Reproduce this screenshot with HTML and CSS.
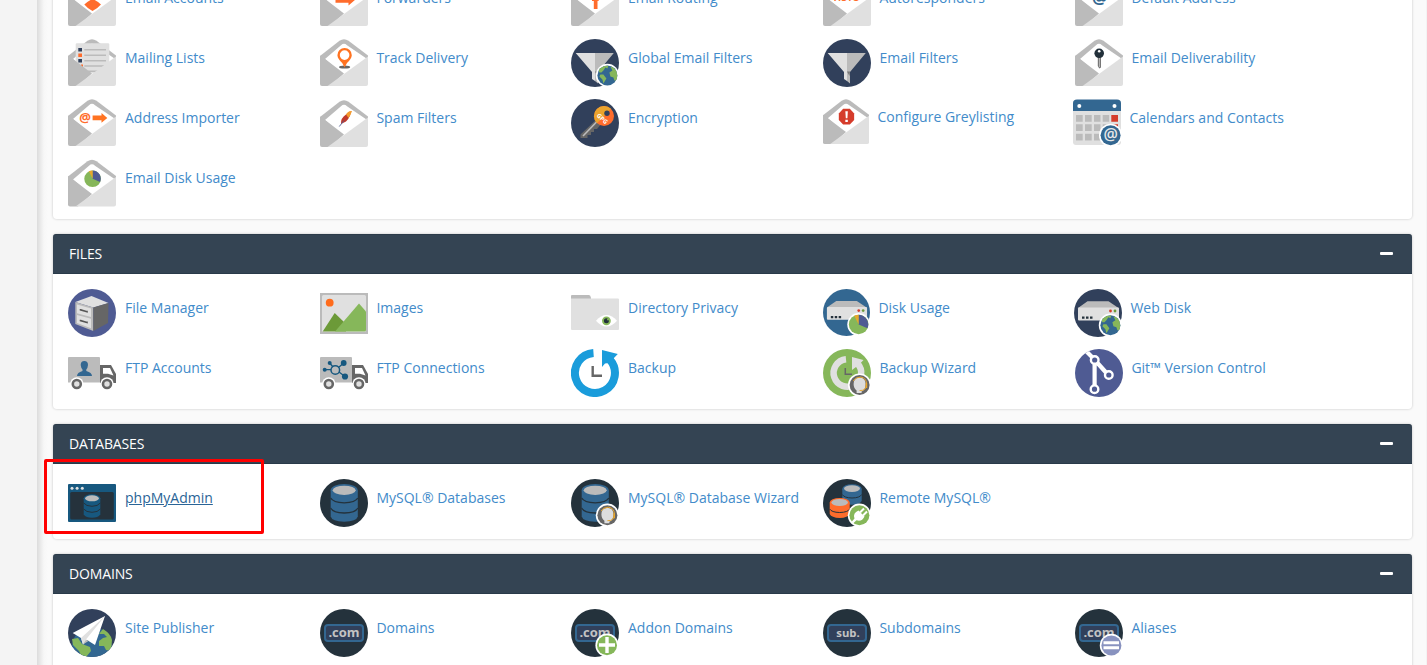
FILE: index.html
```html
<!DOCTYPE html>
<html lang="en">
<head>
<meta charset="utf-8">
<title>cPanel</title>
<link rel="stylesheet" href="styles.css">
</head>
<body>
<svg class="defs" width="0" height="0" aria-hidden="true">
  <defs>
    <clipPath id="disc"><circle cx="24" cy="24" r="24"/></clipPath>
    <clipPath id="unit"><circle r="10"/></clipPath>
    <g id="env-back">
      <path fill="#bbb" d="M0 17 L19.5 1.8 Q24 -1.5 28.5 1.8 L48 16.5 V19 L0 30Z"/>
      <path fill="#fff" d="M5 20 L21 6.2 Q24 3.5 27 6.2 L46.5 19.5 L24 36 Z"/>
    </g>
    <g id="env-front">
      <path fill="#bbb" d="M0 16.5 L5 20 L24 34.5 L10 47 H2 Q0 47 0 45Z"/>
      <path fill="#e0e0e0" d="M7.5 47 L48 17.5 V45 Q48 47 46 47Z"/>
    </g>
    <g id="globe">
      <circle r="11.6" fill="#fff"/><circle r="10" fill="#336791"/>
      <g clip-path="url(#unit)" fill="#86b75a"><path d="M-9 -6 Q-5 -10 1 -10 L0 -7 -2 -8 -4 -5 -6 -3 -8 -3Z M-7 -1 L-4 -1 -1 3 -4 8 -5 4 -8 1Z M3 -9 L6 -8 10 -4 10 5 7 5 6 2 3 1 2 -3 5 -5Z"/></g>
    </g>
    <g id="pie">
      <circle r="10" fill="#86b75a"/><path fill="#4f5b93" d="M0 0V-10A10 10 0 0 1 9 4Z"/><path fill="#e8a62c" d="M0 0L-4.5 -9A10 10 0 0 1 0 -10Z"/>
    </g>
    <g id="headset">
      <circle r="11.6" fill="#fff"/><circle r="10" fill="#666"/>
      <path fill="#ddd" d="M0 -7.5 Q6 -7 6 -1 Q6 5 2 6.5 V8 H-3 V5.5 Q-6 3 -6 -1 Q-6 -7 0 -7.5Z"/>
      <path fill="none" stroke="#e8a62c" stroke-width="1" d="M-6.5 -4 Q-4 -8 1 -8 Q7 -7 7 -1 Q7 6 0 5.5"/><path stroke="#e8a62c" stroke-width="1.6" d="M6.8 -2V3"/>
    </g>
    <g id="funnel">
      <circle cx="24" cy="24" r="24" fill="#31405b"/>
      <path fill="#e0e0e0" d="M4.7 14H24V42L21 40V33Z"/><path fill="#bbb" d="M24 14H42.8L27 33V44.5L24 42Z"/><path fill="#777" d="M24 32.5H27L26.5 37Z"/>
    </g>
    <g id="server">
      <path fill="#bbb" d="M4 19L13.5 12.3H34.5L44.5 19Z"/><rect x="4" y="18.5" width="41" height="13" rx="1" fill="#e0e0e0"/>
      <circle cx="36.5" cy="22" r="1.4" fill="#d53c2b"/><circle cx="41" cy="22" r="1.4" fill="#6c9a38"/>
      <path fill="#25323c" d="M8 27.5h2.5v2.3H8zM12 27.5h2.5v2.3H12zM16 27.5h2.5v2.3H16z"/>
    </g>
    <g id="truck">
      <path fill="#bbb" d="M1 8H31Q32 8 32 9V33.5H0V9Q0 8 1 8Z"/>
      <path fill="#666" d="M32 16H43L48 25V34H32Z"/><path fill="#fff" d="M35 19H42L45.5 26.5L40 24.7H35Z"/>
      <circle cx="8.8" cy="35" r="6.8" fill="#fff"/><circle cx="39" cy="35" r="6.8" fill="#fff"/>
      <circle cx="8.8" cy="35" r="4" fill="#e0e0e0" stroke="#666" stroke-width="2.6"/><circle cx="39" cy="35" r="4" fill="#e0e0e0" stroke="#666" stroke-width="2.6"/>
    </g>
    <g id="db">
      <path fill="#336791" d="M10.7 11.5V37.5Q12 42.5 24.2 42.8Q36.5 42.5 37.8 37.5V11.5Z"/>
      <ellipse cx="24.2" cy="11.3" rx="13.5" ry="6.3" fill="#336791"/><ellipse cx="24.2" cy="11.3" rx="11.5" ry="4.6" fill="#bbb"/>
      <path fill="none" stroke="#24323c" stroke-width="1.3" d="M10.7 19Q13 23.5 24.2 23.8Q35.5 23.5 37.8 19M10.7 29Q13 33.8 24.2 34Q35.5 33.8 37.8 29"/>
    </g>
    <g id="plate">
      <circle cx="24" cy="24" r="24" fill="#24323c"/><rect x="5" y="16" width="38" height="16" rx="3" fill="#31405b" stroke="#336791" stroke-width="2"/>
    </g>
    <g id="com"><use href="#plate"/><text class="glyph" x="24" y="28.4" font-size="13" fill="#c3c3c3">.com</text></g>
  </defs>
</svg>
<aside class="rail"></aside>
<main class="content">
  <section class="panel panel-email">
    <div class="grid">
      <a class="item"><svg class="icon" viewBox="0 0 48 48"><use href="#env-back"/><path fill="#ff6c2c" d="M16.3 25.5Q20 22 24.5 20Q29.5 22 33 25.5Q29 30 24.5 32Q20 30 16.3 25.5Z"/><use href="#env-front"/></svg><span>Email Accounts</span></a>
      <a class="item"><svg class="icon" viewBox="0 0 48 48"><use href="#env-back"/><path fill="#ff6c2c" d="M15.5 17.5H28V14L35.5 20.5L28.5 26.5V23.8H15.5Z"/><use href="#env-front"/></svg><span>Forwarders</span></a>
      <a class="item"><svg class="icon" viewBox="0 0 48 48"><use href="#env-back"/><path fill="#ff6c2c" d="M22.8 30V22H21L21 17H28V21.5L26.5 22V30Z"/><use href="#env-front"/></svg><span>Email Routing</span></a>
      <a class="item"><svg class="icon" viewBox="0 0 48 48"><use href="#env-back"/><text class="glyph" x="24" y="22.3" font-size="9" fill="#ff6c2c">AUTO</text><use href="#env-front"/></svg><span>Autoresponders</span></a>
      <a class="item"><svg class="icon" viewBox="0 0 48 48"><use href="#env-back"/><text class="glyph" x="24.5" y="24.5" font-size="17" fill="#336791">@</text><use href="#env-front"/></svg><span>Default Address</span></a>

      <a class="item"><svg class="icon" viewBox="0 0 48 48"><use href="#env-back"/><rect x="7.7" y="4.3" width="33.6" height="30" rx="1.3" fill="#e0e0e0"/><path fill="#31405b" d="M10.3 9H14v3.5h-3.7zM10.3 20H14v3.5h-3.7z"/><path fill="#ff6c2c" d="M10.3 14.5H14V18h-3.7zM13 25.5h2V28h-2z"/><path stroke="#bbb" stroke-width="1.6" d="M16.3 10.8H38M16.3 16.3H38M16.3 21.7H38M16.3 27H36M20 32.3H30"/><use href="#env-front"/></svg><span>Mailing Lists</span></a>
      <a class="item"><svg class="icon" viewBox="0 0 48 48"><use href="#env-back"/><use href="#env-front"/><ellipse cx="24.6" cy="28" rx="5.6" ry="1.6" fill="#666"/><path fill="#ff7321" fill-rule="evenodd" d="M24.6 9A7.2 7.2 0 0 1 31.8 16.2Q31.5 20 27 24L24.6 28.5L22.2 24Q17.7 20 17.4 16.2A7.2 7.2 0 0 1 24.6 9ZM24.6 11.3A4.8 4.8 0 1 0 24.6 20.9A4.8 4.8 0 1 0 24.6 11.3Z"/></svg><span>Track Delivery</span></a>
      <a class="item"><svg class="icon" viewBox="0 0 48 48"><use href="#funnel"/><use href="#globe" x="36.4" y="36.4"/></svg><span>Global Email Filters</span></a>
      <a class="item"><svg class="icon" viewBox="0 0 48 48"><use href="#funnel"/></svg><span>Email Filters</span></a>
      <a class="item"><svg class="icon" viewBox="0 0 48 48"><use href="#env-back"/><use href="#env-front"/><path fill="#777" d="M22.8 18H26V28.5L24.3 29.5L22.8 27Z"/><path stroke="#bbb" stroke-width=".9" d="M24.5 19V28"/><circle cx="24.2" cy="14.3" r="4.8" fill="#22303a"/><circle cx="24.2" cy="12.2" r="1.3" fill="#fff"/></svg><span>Email Deliverability</span></a>

      <a class="item"><svg class="icon" viewBox="0 0 48 48"><use href="#env-back"/><use href="#env-front"/><text class="glyph" x="17" y="22.8" font-size="13" fill="#ff6c2c">@</text><path fill="#ff7321" d="M24.6 16.6H33.5V14L39.3 19L33.5 23.8V21.3H24.6Z"/></svg><span>Address Importer</span></a>
      <a class="item"><svg class="icon" viewBox="0 -1 48 48"><use href="#env-back"/><use href="#env-front"/><path fill="#c0392b" d="M21 24Q20.5 18 26 14.5L30 11.5Q31.5 16 26 21.5Z"/><path fill="#f39a2e" d="M26 14.5Q28 10.5 32 11Q31 14.5 28.5 18Z"/><path stroke="#4f5b93" stroke-width=".9" fill="none" d="M19.3 26.5L24 20.5"/></svg><span>Spam Filters</span></a>
      <a class="item"><svg class="icon" viewBox="0 0 48 48"><circle cx="24" cy="24" r="24" fill="#31405b"/><path fill="#666" d="M27 19L9.5 35.5V39H16.5V36H20V33H23V30H26L31 24Z"/><path stroke="#bbb" stroke-width="1.6" d="M12 37L26 22.5"/><circle cx="33" cy="17" r="10" fill="#ff6c2c"/><path fill="#eba42d" d="M26 24.2A10 10 0 0 1 40 9.8Z"/><circle cx="36" cy="14.2" r="2.7" fill="#31405b"/><text class="glyph" transform="translate(29.8 21.2) rotate(43)" font-size="6" fill="#fff">GPG</text></svg><span>Encryption</span></a>
      <a class="item grey"><svg class="icon" viewBox="0 0 48 48"><use href="#env-back"/><use href="#env-front"/><path fill="#d53c2b" d="M21 10.3H28L32.5 15V22L28 26.6H21L16.5 22V15Z"/><path fill="#fff" d="M23.3 12.7H25.9L25.5 20H23.8ZM23.3 21.6H25.9V24H23.3Z"/></svg><span>Configure Greylisting</span></a>
      <a class="item shift2"><svg class="icon" viewBox="0 0 48 48"><rect y="3" width="48" height="43" rx="3" fill="#e0e0e0"/><path fill="#336791" d="M0 12V4Q0 .5 4 .5H44Q48 .5 48 4V12Z"/><circle cx="6.3" cy="7" r="2" fill="#fff"/><circle cx="41.5" cy="7" r="2" fill="#fff"/><path fill="#bbb" d="M3 16h6.7v6.7H3zM12 16h6.7v6.7H12zM21 16h6.5v6.7H21zM29.7 16h6.5v6.7H29.7zM3 25.3h6.7V32H3zM12 25.3h6.7V32H12zM21 25.3h6.5V32H21zM29.7 25.3h6.5V32H29.7zM3 34.7h6.7v6.7H3zM12 34.7h6.7v6.7H12zM21 34.7h6.5v6.7H21z"/><path fill="#d53c2b" d="M38.3 16H45v6.7h-6.7zM38.3 25.3H45V32h-6.7z"/><circle cx="37.6" cy="36.3" r="11.6" fill="#fff"/><circle cx="37.6" cy="36.3" r="10" fill="#336791"/><text class="glyph thin" x="37.6" y="41" font-size="16" fill="#e8e8e8">@</text></svg><span>Calendars and Contacts</span></a>

      <a class="item"><svg class="icon" viewBox="0 -.5 48 48"><use href="#env-back"/><use href="#env-front"/><use href="#pie" transform="translate(24.6 19.3) scale(.83)"/></svg><span>Email Disk Usage</span></a>
    </div>
  </section>

  <section class="panel">
    <h2 class="head">FILES<i class="minus"></i></h2>
    <div class="grid">
      <a class="item"><svg class="icon" viewBox="0 0 48 48"><circle cx="24" cy="24" r="24" fill="#4f5b93"/><path fill="#e0e0e0" d="M7.3 13L23.5 7L40.5 14L25.3 18.5Z"/><path fill="#bbb" d="M7.3 13L25.3 18.5V42L7.3 35Z"/><path fill="#666" d="M25.3 18.5L40.5 14L40 34L25.3 42Z"/><path fill="#e0e0e0" d="M9 15.5L23 19.5V28L9 24.3ZM9 26L23 29.8V39.3L9 34Z"/><path stroke="#555" stroke-width="1.6" fill="none" d="M12.5 20V20.8L19 22.7V21.8M12.5 30.8V31.6L19 33.5V32.6"/></svg><span>File Manager</span></a>
      <a class="item"><svg class="icon" viewBox="0 0 48 48"><path fill="#bbb" d="M0 4H48V45H0Z"/><rect x="2" y="6" width="44" height="37" rx="1.5" fill="#e0e0e0"/><circle cx="9.7" cy="13.7" r="3.9" fill="#ff6c1c"/><path fill="#6c9a38" d="M2.7 42.5L14.7 24L26 35V42.5Z"/><path fill="#86b75a" d="M15 42.5L39 14.5L46 22.5V41Q46 42.5 44.5 42.5Z"/></svg><span>Images</span></a>
      <a class="item"><svg class="icon" viewBox="0 0 48 48"><path fill="#bbb" d="M0 12V7Q0 6 1 6H18Q19.5 6 20 9V12Z"/><path fill="#e0e0e0" d="M0 9.5H46Q48 9 48 10.5V40Q48 41 47 41H1Q0 41 0 40Z"/><path fill="#fff" d="M25 31.8Q30 26 35.5 26Q41 26 46 31.8Q41 37.6 35.5 37.6Q30 37.6 25 31.8Z"/><circle cx="35.4" cy="31.8" r="4.4" fill="#86b75a"/><circle cx="35.4" cy="31.8" r="2.5" fill="#22303a"/><circle cx="37" cy="30.5" r="1" fill="#86b75a"/></svg><span>Directory Privacy</span></a>
      <a class="item usage"><svg class="icon" viewBox="0 0 48 48"><circle cx="24" cy="24" r="24" fill="#336791"/><use href="#server"/><circle cx="36.4" cy="36.2" r="11.6" fill="#fff"/><use href="#pie" x="36.4" y="36.2"/></svg><span>Disk Usage</span></a>
      <a class="item shift1"><svg class="icon" viewBox="0 0 48 48"><circle cx="24" cy="24" r="24" fill="#31405b"/><use href="#server"/><use href="#globe" x="36.4" y="36.2"/></svg><span>Web Disk</span></a>

      <a class="item"><svg class="icon" viewBox="0 0 48 48"><use href="#truck"/><path fill="#336791" d="M16.3 12Q20 12 20 16Q19.7 19 18.3 20.5V22Q24 23.5 24 27H9Q9 23.5 14.5 22V20.5Q13 19 12.7 16Q12.7 12 16.3 12Z"/></svg><span>FTP Accounts</span></a>
      <a class="item"><svg class="icon" viewBox="0 0 48 48"><use href="#truck"/><g fill="#17587f"><circle cx="9.7" cy="14" r="2"/><circle cx="23.7" cy="14" r="2.9"/><circle cx="4.7" cy="20.7" r="2"/><circle cx="25" cy="27.5" r="3.1"/></g><path stroke="#17587f" stroke-width="1.3" d="M9.7 14L13 18M23.7 14L18.5 18.5M4.7 20.7H11M25 27.5L19 23"/><circle cx="15.3" cy="21" r="4.3" fill="none" stroke="#17587f" stroke-width="1.5"/></svg><span>FTP Connections</span></a>
      <a class="item"><svg class="icon" viewBox="0 0 48 48"><path fill="none" stroke="#1a9cdb" stroke-width="8" d="M22.5 4A20 20 0 1 0 39 10.8"/><path fill="#1a9cdb" d="M31 1L46.8 5L42.5 9.5L45 13L34 14.5L31 18Z"/><path fill="none" stroke="#666" stroke-width="2.4" d="M21.7 17V26.7H31"/></svg><span>Backup</span></a>
      <a class="item"><svg class="icon" viewBox="0 0 48 48"><circle cx="24" cy="24" r="24" fill="#86b75a"/><path fill="none" stroke="#e0e0e0" stroke-width="6.5" d="M23 10.2A13.8 13.8 0 1 0 34.5 14.5"/><path fill="#e0e0e0" d="M29 8L40.5 11L37.5 14.2L40 18L33 18L29 21Z"/><path fill="none" stroke="#666" stroke-width="1.5" d="M22.3 19V25.3H29"/><use href="#headset" x="36.6" y="36"/></svg><span>Backup Wizard</span></a>
      <a class="item"><svg class="icon" viewBox="0 0 48 48"><circle cx="24" cy="24" r="24" fill="#4f5b93"/><g clip-path="url(#disc)" fill="none" stroke="#fff"><path stroke-width="4.2" d="M10 1L18 9M22.5 14L31 23.5M19.6 14V37"/><g stroke-width="2.4" fill="#4f5b93"><circle cx="19.7" cy="11" r="3.8"/><circle cx="33.8" cy="26" r="3.8"/><circle cx="19.5" cy="40.2" r="3.8"/></g></g></svg><span>Git™ Version Control</span></a>
    </div>
  </section>

  <section class="panel">
    <h2 class="head">DATABASES<i class="minus"></i></h2>
    <div class="grid">
      <a class="item current"><svg class="icon" viewBox="0 0 48 48"><rect y="5" width="48" height="38" rx="1" fill="#17587f"/><rect x="2.2" y="13" width="43.6" height="27.5" rx="1.5" fill="#25323c"/><g fill="#e0e0e0"><circle cx="4" cy="9.3" r="1.5"/><circle cx="9.1" cy="9.3" r="1.5"/><circle cx="14.3" cy="9.3" r="1.5"/></g><path fill="#17587f" d="M15.7 19V35.5Q18 38.7 24 38.8Q30 38.7 32.3 35.5V19Z"/><ellipse cx="24" cy="19.3" rx="8.3" ry="4" fill="#17587f"/><ellipse cx="24" cy="19.3" rx="6.9" ry="3" fill="#bbb"/><path fill="none" stroke="#25323c" d="M15.7 24Q18 27.2 24 27.3Q30 27.2 32.3 24M15.7 30Q18 33.2 24 33.3Q30 33.2 32.3 30"/></svg><span>phpMyAdmin</span></a>
      <a class="item"><svg class="icon" viewBox="0 0 48 48"><circle cx="24" cy="24" r="24" fill="#24323c"/><use href="#db"/></svg><span>MySQL® Databases</span></a>
      <a class="item"><svg class="icon" viewBox="0 0 48 48"><circle cx="24" cy="24" r="24" fill="#24323c"/><use href="#db"/><use href="#headset" x="36.4" y="36.2"/></svg><span>MySQL® Database Wizard</span></a>
      <a class="item"><svg class="icon" viewBox="0 0 48 48"><circle cx="24" cy="24" r="24" fill="#24323c"/><path fill="#336791" d="M19.3 10V22Q21 25.5 29 25.7Q37 25.5 38.7 22V10Z"/><ellipse cx="29" cy="9.8" rx="9.7" ry="4.5" fill="#336791"/><ellipse cx="29" cy="9.6" rx="8" ry="3.3" fill="#bbb"/><path fill="none" stroke="#24323c" d="M19.3 15.5Q21 18.8 29 19Q37 18.8 38.7 15.5"/><path fill="#ff6c2c" d="M6.7 24V35Q8.5 38.7 16.7 39Q25 38.7 26.7 35V24Z"/><ellipse cx="16.7" cy="23.6" rx="10" ry="4.6" fill="#ff6c2c"/><ellipse cx="16.7" cy="23.5" rx="8.3" ry="3.5" fill="#bbb"/><path fill="none" stroke="#24323c" d="M6.7 30Q8.5 33.3 16.7 33.5Q25 33.3 26.7 30"/><circle cx="36.4" cy="36.2" r="11.6" fill="#fff"/><circle cx="36.4" cy="36.2" r="10" fill="#86b75a"/><path fill="#fff" d="M28.5 43L31.5 39.5Q29.5 34 35.5 31.5L41.5 37.5Q39 43 33.5 41.3L30 44.5Z"/><path stroke="#fff" stroke-width="2" d="M37 33.5L41 29.5M40 36.5L44 32.5"/></svg><span>Remote MySQL®</span></a>
    </div>
  </section>

  <section class="panel">
    <h2 class="head">DOMAINS<i class="minus"></i></h2>
    <div class="grid">
      <a class="item"><svg class="icon" viewBox="0 0 48 48"><circle cx="24" cy="24" r="24" fill="#31405b"/><g clip-path="url(#disc)"><circle cx="24" cy="38" r="20" fill="#336791"/><path fill="#86b75a" d="M4 30L10 29L14 35L22 38L23 42L18 48H14L11 42L5 36ZM35 20Q43 25 44 31L43 42L38 41L36 37H31L31 32L35 29L39 28L36 25H31Z"/></g><path fill="#fff" d="M4.7 24L37 7L27 36L19 31L15 35.5L13 29Z"/><path fill="#e0e0e0" d="M13 29L37 7L18 30.5L15 35.5Z"/><path fill="#bbb" d="M15 35.5L18 30.5L20.5 32Z"/></svg><span>Site Publisher</span></a>
      <a class="item"><svg class="icon" viewBox="0 0 48 48"><use href="#com"/></svg><span>Domains</span></a>
      <a class="item"><svg class="icon" viewBox="0 0 48 48"><use href="#com"/><circle cx="36" cy="36.2" r="11.6" fill="#fff"/><circle cx="36" cy="36.2" r="10" fill="#86b75a"/><path stroke="#fff" stroke-width="3.4" d="M36 28V44M28 36H44"/></svg><span>Addon Domains</span></a>
      <a class="item"><svg class="icon" viewBox="0 0 48 48"><use href="#plate"/><text class="glyph" x="25" y="28.2" font-size="11.3" fill="#c3c3c3">sub.</text></svg><span>Subdomains</span></a>
      <a class="item"><svg class="icon" viewBox="0 0 48 48"><use href="#com"/><circle cx="36.4" cy="36.4" r="11.6" fill="#fff"/><circle cx="36.4" cy="36.4" r="10" fill="#8892bf"/><path stroke="#fff" stroke-width="3" d="M28.5 33.8H44M28.5 38.8H44"/></svg><span>Aliases</span></a>
    </div>
  </section>
</main>
<div class="callout"></div>
</body>
</html>
```

FILE: styles.css
```css
* { box-sizing: border-box; }

body {
  display: flex;
  width: 1427px;
  height: 665px;
  margin: 0;
  overflow: hidden;
  position: relative;
  background: #fafafa;
  font-family: "Open Sans", "Noto Sans", sans-serif;
  font-size: 14px;
  line-height: 20px;
}

.defs { position: absolute; }

.rail {
  flex: 0 0 37px;
  background: #f4f4f4;
}

.content {
  flex: 1;
  height: 665px;
  padding: 0 14px 0 16px;
  overflow: hidden;
  background: linear-gradient(to right, #dcdcdc, #ececec 4px, #f7f7f7 7px, #fafafa 11px);
  border-right: 1px solid #f3f3f3;
}

.panel {
  width: 1359px;
  margin-bottom: 15px;
  background: #fff;
  border-radius: 4px;
  box-shadow: 0 0 2px 1px rgba(0, 0, 0, .1);
}

.panel-email { margin-top: -36px; }

.head {
  display: flex;
  align-items: center;
  justify-content: space-between;
  height: 40px;
  margin: 0;
  padding: 0 19px 0 16px;
  background: #344453;
  border-bottom: 1px solid #293a49;
  border-top: 1px solid #2c3c4a;
  border-radius: 3px 3px 0 0;
  color: #fff;
  font-size: 14px;
  font-weight: 400;
  letter-spacing: -.15px;
}

.minus {
  width: 13px;
  height: 3px;
  margin-bottom: 1px;
  border-radius: 1px;
  background: #fff;
}

.grid {
  display: grid;
  grid-template-columns: 252px 251px 252px 252px 251px;
  grid-auto-rows: 60px;
  padding: 15px 0 0 15px;
}

.item {
  display: flex;
  align-items: flex-start;
  gap: 9px;
  color: #428bca;
  white-space: nowrap;
}

.item span { margin-top: 9px; }

/* labels keep the fractional column pitch while icons sit on whole pixels */
.item:nth-child(5n+2) span,
.item:nth-child(5n+4) span,
.item:nth-child(5n) span { margin-left: -.6px; }

.item.current { color: #2a6496; }
.item.current span { text-decoration: underline; }

.icon {
  flex: none;
  width: 48px;
  height: 48px;
}

.grey .icon { width: 46px; height: 46px; }
.grey span { margin-top: 8px; }
.usage .icon { width: 47px; height: 47px; }
.shift1 { margin-left: -1px; }
.shift2 { margin-left: -2px; }

.glyph {
  font-family: "Open Sans", sans-serif;
  font-weight: 700;
  text-anchor: middle;
}

.glyph.thin { font-weight: 600; }

/* highlight frame drawn over the phpMyAdmin entry */
.callout {
  position: absolute;
  left: 44px;
  top: 459px;
  width: 220px;
  height: 75px;
  border: 3px solid #f00;
  border-radius: 2px;
}
```
